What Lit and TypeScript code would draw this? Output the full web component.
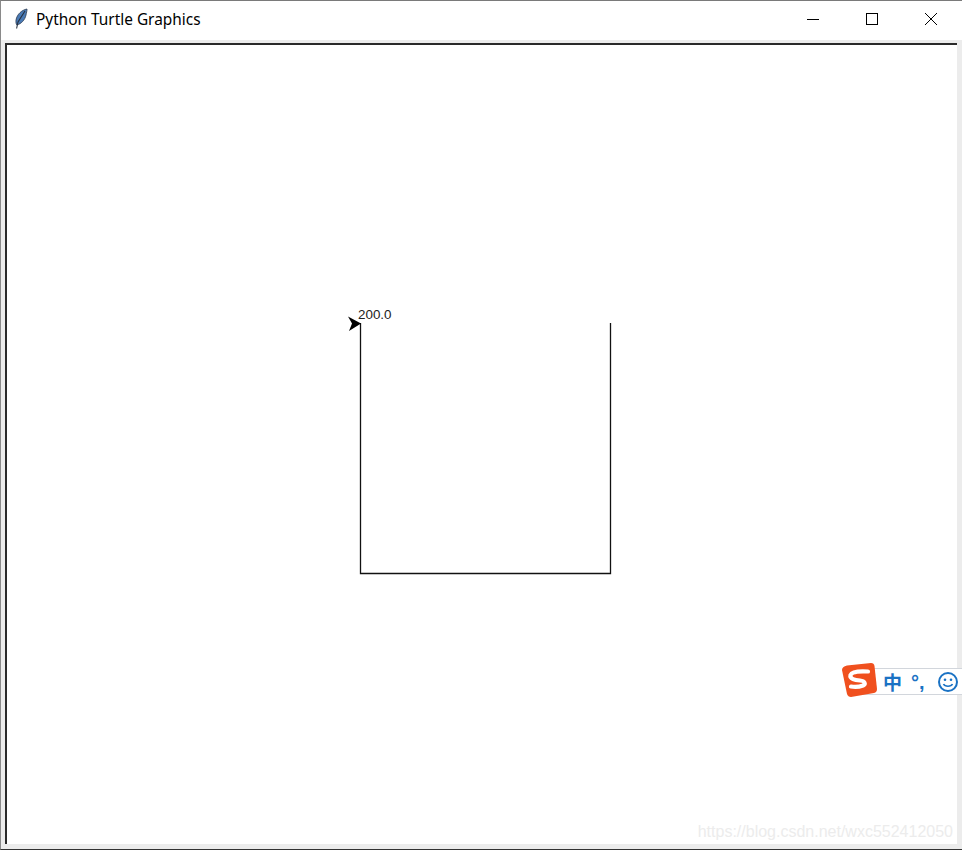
import { LitElement, html, css } from "lit";
import { customElement } from "lit/decorators.js";

@customElement("app-root")
export class AppRoot extends LitElement {
  static styles = css`
    :host { display: block; width: 962px; height: 850px; overflow: hidden; position: relative; background: #fff; font-family: "Noto Sans", sans-serif; }
    .window { display: flex; flex-direction: column; height: 850px; box-sizing: border-box; border-top: 1px solid #7a7a7a; border-bottom: 1px solid #333; border-left: 1px solid #8a8a8a; }
    .titlebar { flex: none; height: 39px; display: flex; align-items: center; background: #fff; padding: 0 2px 3px 0; box-sizing: border-box; }
    .feather { flex: none; margin-left: 12px; margin-right: 1px; width: 16px; height: 22px; }
    .title { margin-left: 6px; font-size: 15.4px; color: #000; white-space: nowrap; flex: 1; }
    .ctl { flex: none; width: 59px; height: 36px; display: flex; align-items: center; justify-content: center; }
    .ctl svg { width: 14px; height: 14px; }
    .frame { flex: 1; min-height: 0; display: flex; background: #ececec; padding: 3px 5px 5px 4px; }
    .canvas { flex: 1; min-width: 0; position: relative; overflow: hidden; background: #fff; border-top: 2px solid #2a2a2a; border-left: 2px solid #2a2a2a; }
    .canvas svg { position: absolute; left: 0; top: 0; width: 950px; height: 800px; }
    .label { font-family: "Liberation Sans", Arial, sans-serif; font-size: 13.4px; fill: #222; }
    .ime { position: absolute; left: 841px; top: 662px; width: 121px; height: 36px; }
    .imebar { position: absolute; left: 14px; top: 6px; right: 0; height: 27px; box-sizing: border-box; background: #fff; border: 1px solid #d2d6dc; border-right: none; display: flex; align-items: center; color: #1a72c4; }
    .zh { margin-left: 27px; font-family: "Noto Sans CJK SC", sans-serif; font-size: 19px; font-weight: 700; line-height: 1; }
    .punct { margin-left: 9px; font-family: "Liberation Sans", sans-serif; font-size: 20px; font-weight: 700; line-height: 1; }
    .smile { position: absolute; left: 81px; top: 2px; width: 22px; height: 22px; }
    .logo { position: absolute; left: 0; top: 0; width: 37px; height: 36px; }
    .wm { position: absolute; right: 9px; bottom: 9px; font-family: "Liberation Sans", Arial, sans-serif; font-size: 16px; color: #ececec; white-space: nowrap; }
  `;

  render() {
    return html`
      <div class="window">
        <div class="titlebar">
          <svg class="feather" viewBox="0 0 16 22">
            <path d="M14 1 C9 2 4 6 3 12 C2.700 14.500 3.200 16 3.800 17 C8 16 12 12 13 7 C13.500 4.500 14 3 14 1 Z" fill="#4a7ab5" stroke="#2b3a50" stroke-width="0.8"/>
            <path d="M12 3 L5 14 L3.600 20.500" fill="none" stroke="#26303e" stroke-width="1.100"/>
          </svg>
          <div class="title">Python Turtle Graphics</div>
          <div class="ctl"><svg viewBox="0 0 14 14"><path d="M1 7.500H13" stroke="#000" stroke-width="1"/></svg></div>
          <div class="ctl"><svg viewBox="0 0 14 14"><rect x="1.500" y="1.500" width="11" height="11" fill="none" stroke="#000"/></svg></div>
          <div class="ctl"><svg viewBox="0 0 14 14"><path d="M1 1L13 13M13 1L1 13" stroke="#000" stroke-width="1"/></svg></div>
        </div>
        <div class="frame">
          <div class="canvas">
            <svg viewBox="7 45 950 800">
              <path d="M610.500 323V573.500H360.500V323" fill="none" stroke="#111" stroke-width="1.300"/>
              <path d="M361 323.500L348 316.500L352 323.500L349 331Z" fill="#000"/>
              <text class="label" x="358" y="319">200.0</text>
            </svg>
          </div>
        </div>
      </div>
      <div class="wm">https://blog.csdn.net/wxc552412050</div>
      <div class="ime">
        <div class="imebar">
          <span class="zh">中</span>
          <span class="punct">°,</span>
          <svg class="smile" viewBox="0 0 22 22">
            <circle cx="11" cy="11" r="9" fill="none" stroke="#1a72c4" stroke-width="2"/>
            <circle cx="8" cy="8.800" r="1.300" fill="#1a72c4"/>
            <circle cx="14" cy="8.800" r="1.300" fill="#1a72c4"/>
            <path d="M6.500 13C8 16 14 16 15.500 13" fill="none" stroke="#1a72c4" stroke-width="1.600"/>
          </svg>
        </div>
        <svg class="logo" viewBox="0 0 37 36">
          <path d="M6 3.500L30 1Q33 1 33.500 4L36 27Q36 30 33 31L10 35Q7 35 6 32L1 8Q1 4.500 6 3.500Z" fill="#f0501e"/>
          <path d="M27 9.500C20 9 11 9.500 9.500 13C8.500 17 14 18 19 18.500C24 19 25 22 22 23.500C18 25 13 25 10 24.500" fill="none" stroke="#fff" stroke-width="4.200" stroke-linecap="round"/>
        </svg>
      </div>
    `;
  }
}
